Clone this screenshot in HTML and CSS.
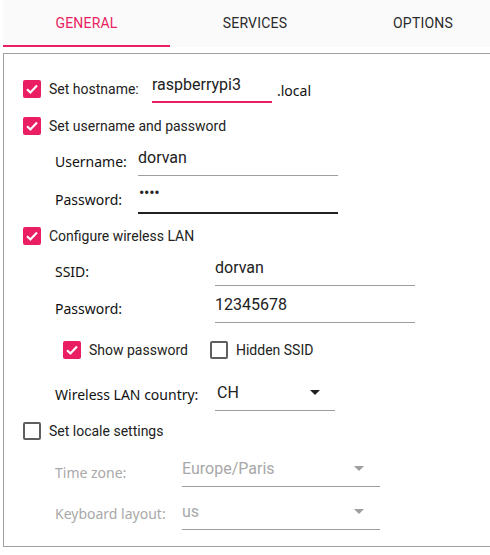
FILE: index.html
```html
<!DOCTYPE html>
<html>
<head>
<meta charset="utf-8">
<link rel="stylesheet" href="styles.css">
</head>
<body>
<div class="tabs">
  <div class="tab active">GENERAL</div>
  <div class="tab">SERVICES</div>
  <div class="tab">OPTIONS</div>
</div>
<div class="frame">
  <div class="row r1">
    <span class="cb on"><svg viewBox="0 0 18 18"><path d="M4 9.2 L7.4 12.4 L14 5.6"/></svg></span>
    <span class="cblabel hostlabel">Set hostname:</span>
    <div class="input host focus">raspberrypi3</div>
    <span class="suffix">.local</span>
  </div>
  <div class="row cbrow r2">
    <span class="cb on"><svg viewBox="0 0 18 18"><path d="M4 9.2 L7.4 12.4 L14 5.6"/></svg></span>
    <span class="cblabel">Set username and password</span>
  </div>
  <div class="row field r3">
    <span class="label lw-user">Username:</span>
    <div class="input w200">dorvan</div>
  </div>
  <div class="row field r4">
    <span class="label lw-user">Password:</span>
    <div class="input w200 active dots">••••</div>
  </div>
  <div class="row cbrow r5">
    <span class="cb on"><svg viewBox="0 0 18 18"><path d="M4 9.2 L7.4 12.4 L14 5.6"/></svg></span>
    <span class="cblabel">Configure wireless LAN</span>
  </div>
  <div class="row field r6">
    <span class="label lw-wifi">SSID:</span>
    <div class="input w200">dorvan</div>
  </div>
  <div class="row field r7">
    <span class="label lw-wifi">Password:</span>
    <div class="input w200">12345678</div>
  </div>
  <div class="row cbrow r8 sub">
    <span class="cb on"><svg viewBox="0 0 18 18"><path d="M4 9.2 L7.4 12.4 L14 5.6"/></svg></span>
    <span class="cblabel showpw">Show password</span>
    <span class="cb off"></span>
    <span class="cblabel">Hidden SSID</span>
  </div>
  <div class="row field r9">
    <span class="label lw-wifi flat">Wireless LAN country:</span>
    <div class="select w120"><span class="val">CH</span><span class="arrow"></span></div>
  </div>
  <div class="row cbrow r10">
    <span class="cb off"></span>
    <span class="cblabel">Set locale settings</span>
  </div>
  <div class="row field r11 disabled">
    <span class="label lw-locale">Time zone:</span>
    <div class="select w198"><span class="val">Europe/Paris</span><span class="arrow"></span></div>
  </div>
  <div class="row field r12 disabled">
    <span class="label lw-locale flat">Keyboard layout:</span>
    <div class="select w198"><span class="val">us</span><span class="arrow"></span></div>
  </div>
</div>
</body>
</html>
```

FILE: styles.css
```css
html, body {
  margin: 0;
  padding: 0;
  background: #ffffff;
  overflow: hidden;
  width: 490px;
  height: 555px;
}
body {
  font-family: Roboto, "Liberation Sans", sans-serif;
  color: #212121;
}
.tabs {
  display: flex;
  height: 47px;
  background: #fafafa;
  margin-left: 3px;
  width: 487px;
  overflow: hidden;
}
.tab {
  flex: 0 0 168px;
  box-sizing: border-box;
  height: 47px;
  line-height: 46px;
  text-align: center;
  font-size: 14px;
  font-weight: 400;
  color: #2b2b2b;
  letter-spacing: 0.2px;
}
.tab.active {
  color: #e91e63;
  border-bottom: 2px solid #e91e63;
  flex-basis: 167px;
  margin-right: 1px;
}
.frame {
  margin: 6px 0 0 3px;
  width: 488px;
  box-sizing: border-box;
  border: 1px solid #a0a0a0;
  border-right: 0;
  padding: 18px 0 16px 19px;
}
.row {
  display: flex;
  align-items: center;
  height: 34px;
}
.cbrow { height: 30px; }
.field { padding-left: 32px; }
.sub { padding-left: 40px; }
.r2 { margin-top: 5px; }
.r3 { margin-top: 1px; }
.r4 { margin-top: 4px; }
.r5 { margin-top: 7px; }
.r6 { margin-top: 1px; }
.r7 { margin-top: 3px; }
.r8 { margin-top: 12px; }
.r9 { margin-top: 12px; }
.r10 { margin-top: 5px; }
.r11 { margin-top: 7px; }
.r12 { margin-top: 9px; }

.cb {
  flex: 0 0 18px;
  width: 18px;
  height: 18px;
  box-sizing: border-box;
  border-radius: 2px;
  display: flex;
}
.cb.on { background: #e91e63; }
.cb.off { border: 2px solid #5f5f5f; }
.cb svg {
  width: 18px;
  height: 18px;
  fill: none;
  stroke: #ffffff;
  stroke-width: 2.2;
}
.cblabel {
  margin-left: 8px;
  font-size: 14px;
  color: #222222;
}
.showpw { margin-right: 22px; }
.hostlabel { flex: 0 0 95px; margin-right: 8px; }
.label {
  font-family: "Noto Sans", "Open Sans", sans-serif;
  font-size: 14px;
  color: #111111;
  padding-top: 4px;
}
.label.flat { padding-top: 0; }
.lw-user { flex: 0 0 83px; }
.lw-wifi { flex: 0 0 160px; }
.lw-locale { flex: 0 0 127px; }
.input, .select {
  box-sizing: border-box;
  height: 34px;
  line-height: 32px;
  font-size: 16px;
  color: #212121;
  border-bottom: 1px solid #9e9e9e;
}
.input.active { border-bottom: 2px solid #212121; }
.input.focus { border-bottom: 2px solid #e91e63; }
.host {
  flex: 0 0 120px;
  margin-bottom: 6px;
}
.dots { letter-spacing: -0.3px; font-size: 16px; line-height: 26px; padding-left: 1px; }
.suffix {
  margin-left: 5px;
  font-family: "Noto Sans", "Open Sans", sans-serif;
  font-size: 14px;
  color: #111111;
  padding-top: 2px;
}
.w200 { width: 200px; }
.w120 { width: 120px; }
.w198 { width: 198px; }
.select {
  display: flex;
  align-items: center;
  justify-content: space-between;
  line-height: normal;
  padding: 0 15px 2px 2px;
}
.arrow {
  width: 0;
  height: 0;
  border-left: 5px solid transparent;
  border-right: 5px solid transparent;
  border-top: 5px solid #212121;
}
.disabled .label { color: #a8a8a8; }
.disabled .select { color: #a8a8a8; padding-left: 0; padding-right: 16px; }
.disabled .arrow {
  border-top: 5px solid #9e9e9e;
}
```
